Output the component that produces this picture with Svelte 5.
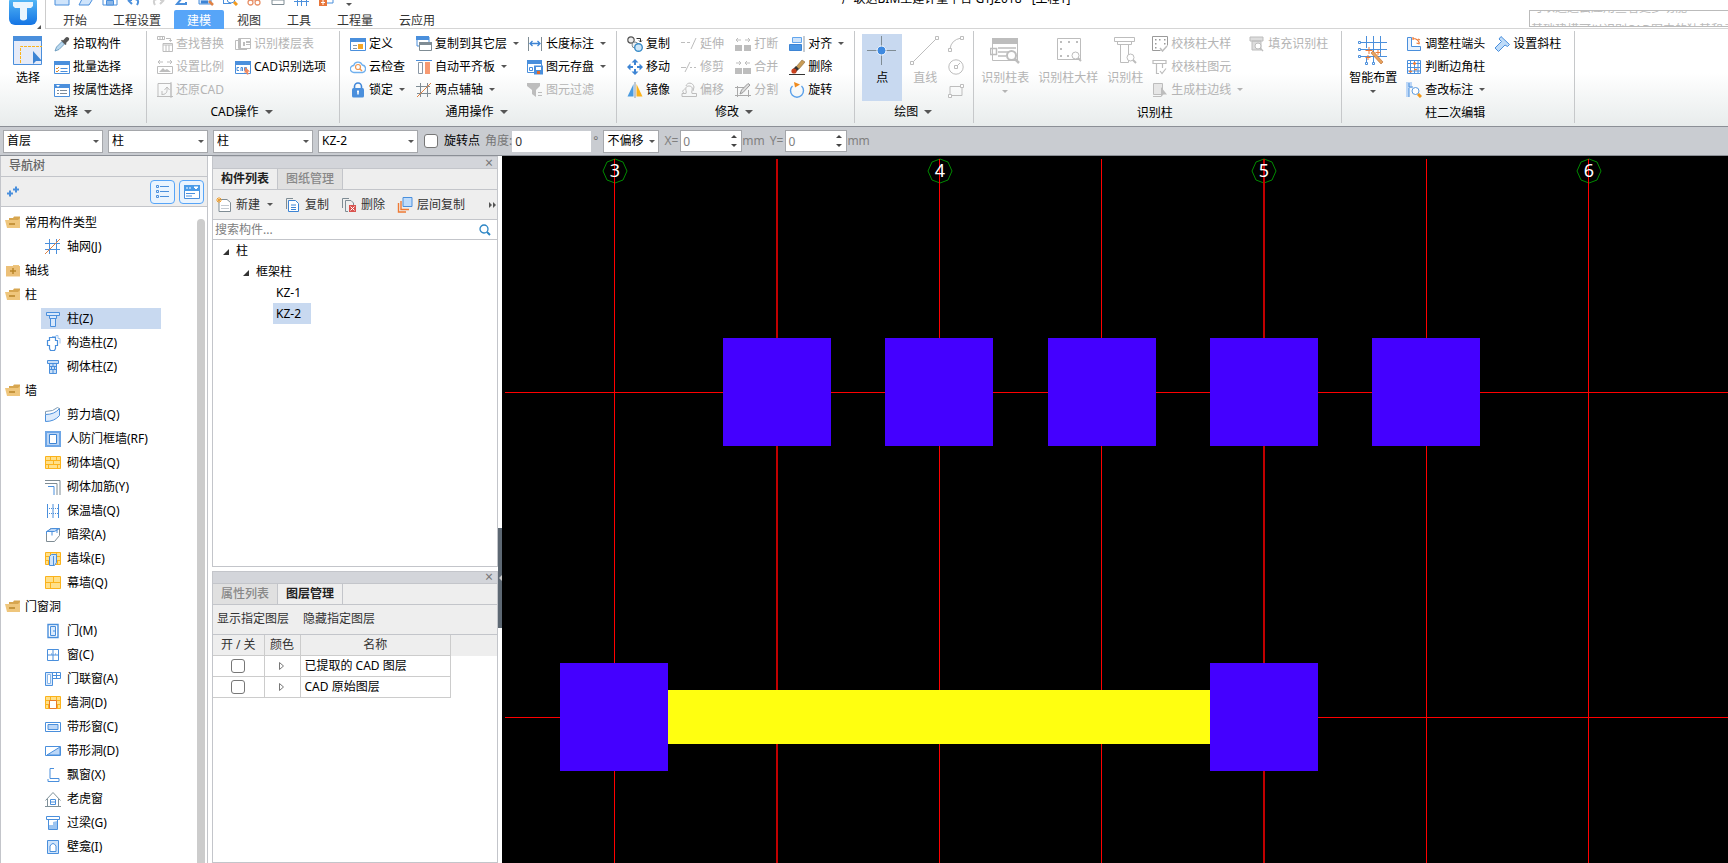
<script>
  // icon artwork, 16x16 unless the name starts with "big"
  const B = '#4a8fdc';
  const G = '#bdbdbd';
  const Y = '#fbb31c';
  const win = (c) => `<path d="M.5 2.500h15v12H.5z" fill="#fff" stroke="${c}"/><path d="M0 2h16v4H0z" fill="${c}"/>`;
  const brick = `<path d="M.5 1.500h15v12H.5z" fill="#ffe08a" stroke="${Y}"/><path d="M1 5.500h14M1 9.500h14M5.500 2v3M11.500 2v3M8.500 6v3M3.500 10v4M12.500 10v4" stroke="${Y}" fill="none"/>`;

  const icons = {
    bigSelect: `<path d="M.5.5h28v28H.5z" fill="#e6ebf8" stroke="${B}"/><path d="M0 0h29v5H0z" fill="${B}"/><path d="M7.500 27V10.500H29" fill="none" stroke="${Y}" stroke-dasharray="3 1"/><path d="M20 15v13l3-3h6z" fill="#3d84d4"/>`,
    pick: `<path d="M1 15l1.500-4L8 5.500 10.500 8 5 13.500z" fill="#b9d8ef" stroke="#5b8fb5" stroke-width=".8"/><path d="M7 4.500l4.500 4.500 1-1-.5-1 3-3q.8-2-1-2.800-1.500-.7-2.500.5L9 4.500l-1-.8z" fill="#555"/>`,
    batch: win(B) + `<path d="M2 9l1 1 2-2M2 12l1 1 2-2" fill="none" stroke="#e08b2c"/><path d="M6.500 9.500h7M6.500 12.500h7" stroke="${B}"/>`,
    attr: win(B) + `<path d="M2 3h4L4 5z" fill="#fff"/><path d="M3 8.500h2M6 8.500h7M3 11.500h2M6 11.500h7" stroke="#7b8a99"/>`,
    replace: `<path d="M.5.5h7v3h-7zM3 .5v3M5.500.5v3M9 2.500h4.500V5M12 4l1.500 1.500L15 4M6 7.500h9.500v8H6zM6 9h9M9 9v6M12 9v6" fill="none" stroke="${G}"/>`,
    scale: `<path d="M1 3h5M3 1L1 3l2 2M15 3h-5M13 1l2 2-2 2M.5 7.500h15v7H.5z" fill="none" stroke="${G}"/><path d="M2 13l4-4 2 2 2-1 4 3z" fill="${G}"/>`,
    restore: `<path d="M1 1.500h13v13H1zM14 0v16M0 14.500h16M5 12.500c6 0 5-5 5-7M7.500 8L10 5l2.500 3M5 9v4" fill="none" stroke="${G}"/>`,
    floors: `<path d="M3.500 2.500h12v10h-12zM3 4.500h-2.500v9H12" fill="none" stroke="${G}"/><path d="M4 3h2v9H4zM8 6h2v4H8zM11 5h4v2h-4zM11 8h4v1h-4z" fill="${G}"/>`,
    cadopt: win(B) + `<path d="M4 8.500H2v3h2M6 12V8.500h1.500V12M9.500 8.500v3h2v-3z" fill="none" stroke="${B}"/><path d="M10 8l5 4.500-2.500.2L14 15l-2 .8-1-2.500-1.500 1z" fill="#f0875c"/>`,
    define: win(B) + `<path d="M3 9.500h4M3 12.500h4" stroke="#8a97a5"/><path d="M8 8h5v5H8z" fill="#f5a623"/>`,
    cloud: `<path d="M4 13.500a3.500 3.500 0 01-.3-7 4.500 4.500 0 018.600-.5 3.800 3.800 0 01.2 7.500z" fill="#fff" stroke="#6fb0ee" stroke-width="1.300"/><circle cx="8" cy="8" r="2.500" fill="none" stroke="#ee9650" stroke-width="1.200"/><path d="M9.800 9.800L12 12" stroke="#ee9650" stroke-width="1.400"/>`,
    lock: `<path d="M4.500 7V4.500a3.500 3.500 0 017 0V7" fill="none" stroke="#3f86d8" stroke-width="1.600"/><rect x="2" y="6" width="12" height="9.500" rx="1.500" fill="#4a8fdc"/><path d="M8 8.500v4M7 9.500h2" stroke="#fff" stroke-width="1.500"/>`,
    copyFloor: `<path d="M1 1h12v9H1z" fill="#fff" stroke="${B}"/><path d="M0 0h13v4H0z" fill="${B}"/><path d="M3.500 6.500h12v8h-12z" fill="#fff" stroke="#7f8c94"/><path d="M3 6h13v3H3z" fill="#7f8c94"/>`,
    flush: `<path d="M0 1.500h16" stroke="${B}"/><path d="M2.500 3.500h4v11h-4z" fill="#fff" stroke="#8a97a5"/><path d="M9 3h5v12H9z" fill="#f79a72"/>`,
    aux: `<path d="M0 4.500h14M1 11.500h14M4.500 1v14M11.500 1v14" stroke="#7f8c94" fill="none"/><path d="M1 15L15 1" stroke="#e08244"/>`,
    length: `<path d="M1.500 1v14M14.500 1v14" stroke="#7f8c94"/><path d="M3 7.500h10M5.500 5L3 7.500 5.500 10M10.500 5L13 7.500 10.500 10" fill="none" stroke="#3d84d4" stroke-width="1.300"/>`,
    save: `<path d="M.5 1.500h14v12H.5z" fill="#fff" stroke="${B}"/><path d="M0 1h15v4H0z" fill="${B}"/><path d="M2.500 8.500h3v3h-3z" fill="none" stroke="${B}"/><path d="M7 6.500h9v9H7z" fill="${B}"/><path d="M9 8h5v3H9z" fill="#fff"/><path d="M10 12h3v3h-3z" fill="#e06a2c"/>`,
    filter: `<path d="M0 1h13v3L9 8v7l-4-3V8L0 4z" fill="${G}"/><path d="M11 10.500h4M11 13.500h4" stroke="${G}"/>`,
    copy: `<circle cx="4" cy="4" r="3.200" fill="#eee" stroke="#555" stroke-width="1.200"/><circle cx="8" cy="9" r="3" fill="#eee" stroke="#7f8c94"/><circle cx="11.500" cy="11.500" r="3.800" fill="#cfe6f7" stroke="#3a8cc8" stroke-width="1.400"/><path d="M9.500 2.500h4V6M12 4.500L13.500 6 15 4.500" fill="none" stroke="#333"/>`,
    move: `<path d="M8 0l3.500 3.500H9V6H7V3.500H4.500zM8 16l3.500-3.500H9V10H7v2.500H4.500zM0 8l3.500-3.500V7H6v2H3.500v2.500zM16 8l-3.500-3.500V7H10v2h2.500v2.500z" fill="#3d84d4"/>`,
    mirror: `<path d="M6.500 2v12.500H.5z" fill="#4a9be0"/><path d="M9.500 2v12.500h6z" fill="#fbb31c"/><path d="M8 0v16" stroke="#8a97a5"/>`,
    extend: `<path d="M0 6.500h4M6 6.500h3" stroke="${G}"/><path d="M10 13L15 2" stroke="${G}"/>`,
    trim: `<path d="M0 8.500h5M9 8.500h2M13 8.500h2M4 13L9 3" stroke="${G}"/>`,
    offset: `<path d="M1 14.500h14.500v-3H11c-1-2 1-4 0-6s-5-2-6 0 1 4 0 6H1zM3 11c-3-1 0-4 1-4M5 4c1-4 7-4 8 1l-1 4" fill="none" stroke="${G}"/>`,
    breakUp: `<path d="M0 9h7v6H0zM9 9h7v6H9z" fill="${G}"/><path d="M1 4h5M3 2L1 4l2 2M15 4h-5M13 2l2 2-2 2" fill="none" stroke="${G}"/>`,
    merge: `<path d="M0 9h7v6H0zM8 9h8v6H8z" fill="${G}"/><path d="M1 4h5M4 2l2 2-2 2M15 4h-5M12 2l-2 2 2 2" fill="none" stroke="${G}"/>`,
    split: `<path d="M0 5.500h9M0 13.500h16M2.500 4v11M13.500 8v7" stroke="#aaa" fill="none"/><path d="M5 12l1.500-4L13 1.500 15 3 8 10.500z" fill="#ddd" stroke="#999"/>`,
    align: `<path d="M3.500 1.500h9v5h-9z" fill="#cfe4fb" stroke="#62a5ec"/><path d="M.5 8.500h12v6H.5z" fill="#4a96e4" stroke="#3d84d4"/><path d="M15 0v16" stroke="#8a97a5"/>`,
    erase: `<path d="M0 15.500h16" stroke="#333"/><path d="M7 8l6-7 3 2-6 7z" fill="#c99c55" stroke="#8a6a3a" stroke-width=".6"/><path d="M4 10l3-3 3 3-3 3z" fill="#333"/><circle cx="5" cy="12" r="2.600" fill="#c9421f"/>`,
    rotate: `<path d="M12.500 4A6.500 6.500 0 113.500 4" fill="none" stroke="#5aa0ea" stroke-width="1.400"/><path d="M5 0l6 2.500-5 3z" fill="#ef8a1d"/>`,
    bigPoint: `<path d="M14.500 0v29M0 14.500h29" stroke="#7f8c94"/><circle cx="14.500" cy="14.500" r="4.500" fill="#3f8ae0" stroke="#fff"/>`,
    bigLine: `<path d="M3 26L26 3" stroke="${G}"/><path d="M.5 25.500h3v3h-3zM25.500.5h3v3h-3z" fill="#fff" stroke="${G}"/>`,
    arc: `<path d="M2 13Q3 4 13 2" fill="none" stroke="${G}"/><path d="M.5 12.500h3v3h-3zM12.500.5h3v3h-3z" fill="#fff" stroke="${G}"/>`,
    circle: `<circle cx="8" cy="8" r="7.200" fill="none" stroke="${G}"/><path d="M8 8l4-4" stroke="${G}"/><path d="M6.500 6.500h3v3h-3z" fill="#fff" stroke="${G}"/>`,
    rect: `<path d="M2 4.500h12v9H2z" fill="none" stroke="${G}"/><path d="M12.500 2.500h3v3h-3zM.5 12.500h3v3h-3z" fill="#fff" stroke="${G}"/>`,
    bigTable: `<path d="M2.500 2.500h25v22h-25z" fill="#fff" stroke="${G}"/><path d="M2 2h26v6H2z" fill="${G}"/><path d="M.5 12.500h6v6h-6zM8 12h18M8 16h10M8 20h8" fill="none" stroke="${G}" stroke-width="1.500"/><circle cx="21.500" cy="19.500" r="4.500" fill="#fff" stroke="${G}" stroke-width="2"/><path d="M25 23l4 4" stroke="${G}" stroke-width="2.500"/>`,
    bigSample: `<path d="M4.500 2.500h23v21h-23z" fill="none" stroke="${G}"/><path d="M7 5h2v2H7zM15 5h2v2h-2zM23 5h2v2h-2zM7 12h2v2H7zM7 19h2v2H7zM14 19h2v2h-2z" fill="${G}"/><circle cx="22.500" cy="19.500" r="3.500" fill="#fff" stroke="${G}"/><path d="M25 22l3 3" stroke="${G}" stroke-width="2"/>`,
    bigColumn: `<path d="M4.500 1.500h20v4h-20zM7.500 5.500h14v3h-14zM10.500 8.500h8v18h-8z" fill="#fff" stroke="${G}"/><circle cx="20.500" cy="21.500" r="3.500" fill="#fff" stroke="${G}"/><path d="M23 24l3 3" stroke="${G}" stroke-width="2"/>`,
    checkSample: `<path d="M.5.5h15v9M.5.5v14h8" fill="none" stroke="#9a9a9a"/><path d="M3 3h1.500v1.500H3zM7 3h1.500v1.500H7zM12 3h1.500v1.500H12zM3 7h1.500v1.500H3zM3 11h1.500v1.500H3zM12 7h1.500v1.500H12z" fill="#9a9a9a"/><path d="M8 12l2.500 3L15 10" fill="none" stroke="${G}" stroke-width="1.500"/>`,
    checkElem: `<path d="M1 1.500h13v3H1zM3 4.500h9M4.500 5v9.500H7M10.500 5v4M8 12l2 2.500 4-5" fill="none" stroke="${G}" stroke-width="1.200"/>`,
    edge: `<path d="M1.500 1.500h9v11h-9z" fill="#e6e6e6" stroke="${G}"/><path d="M1 14.500h8" stroke="${G}"/><path d="M9 5v10l2.500-2.500H15z" fill="${G}"/>`,
    fill: `<path d="M1 1h13v4H1zM3 5h9v9H3z" fill="#ddd" stroke="${G}"/><circle cx="9" cy="10" r="3" fill="#fff" stroke="${G}"/><path d="M11 12l3 3" stroke="${G}" stroke-width="1.500"/>`,
    bigSmart: `<path d="M2 6.500h27M3 13.500h26M3 20.500h26M8.500 20v7M15.500 20v7M8.500 0v12M15.500 0v16M22.500 0v20" stroke="${B}" fill="none"/><path d="M.5 5.500h2v2h-2zM.5 12.500h2v2h-2zM.5 19.500h2v2h-2zM7.500 26.500h2v2h-2zM14.500 26.500h2v2h-2z" fill="#fff" stroke="${B}"/><path d="M13 17l2-2 10 11-2 2z" fill="#e8a25c" stroke="#b9672a" stroke-width=".6"/><path d="M11 11v7M7.500 14.500h7M20 14v5M17.500 16.500h5M10 19v5M7.500 21.500h5" stroke="#ee7a35" fill="none"/>`,
    end: `<path d="M1.500 1.500h4v9h9v4h-13z" fill="#e9f2fd" stroke="${B}"/><path d="M7 2.500q5 0 6.500 5M13.500 8l-3-1M7 1v3M12 3l2 1" fill="none" stroke="#ee7a35" stroke-width="1.200"/>`,
    corner: `<path d="M1.500 1.500h13v13h-13zM4.500 1v14M8.500 1v14M12 1v14M1 4.500h14M1 8.500h14M1 12h14" fill="none" stroke="${B}"/><path d="M7 4.500h3M8.500 3v3M3 12.500h3M8 10.500h3" stroke="#ee7a35" stroke-width="1.500"/>`,
    label: `<path d="M0 0h6v6H3v9H0z" fill="#bcd7f7"/><path d="M3 1v4h4M3 15V6" fill="none" stroke="${B}"/><circle cx="9.500" cy="9" r="3.500" fill="#fff" stroke="#5b9be0"/><path d="M12 12l3 3" stroke="#f29a1d" stroke-width="3"/>`,
    slant: `<path d="M7 .5l8.500 8-2 2-2.500-1.500-6.500 6.500L1 12l6.500-6.500L5 3z" fill="#bfdcf9" stroke="${B}"/>`,
    grid: `<path d="M0 4.500h15M0 10.500h15M4.500 0v15M11.500 0v15" stroke="${B}" fill="none"/><path d="M0 15L15 0" stroke="#e08244"/>`,
    column: `<path d="M1.500 1.500h13v3h-13zM4.500 4.500v3h7v-3zM5.500 7v8.500h5V7" fill="#d8e8fb" stroke="${B}"/>`,
    structCol: `<path d="M7 1.500h4v-1h2v3h2v5" fill="none" stroke="#9cc3ee"/><path d="M4.500 2.500h6v3h2v5h-2v3l-1 2h-4l-1-2v-3h-2v-5h2z" fill="#fff" stroke="${B}" stroke-width="1.200"/>`,
    brickCol: `<path d="M2.500 1.500h11v3h-11zM4.500 4.500h7v10h-7z" fill="#c9dff7" stroke="${B}"/><path d="M4 7.500h8M4 10.500h8M8 4v3M6.500 7v3M9.500 7v3M8 11v3" stroke="${B}"/>`,
    shear: `<path d="M.5 7.500q9 0 14-6v7q-5 6-14 6z" fill="#dcebfc" stroke="${B}"/><path d="M.5 7.500v-3q8 0 12-4l2.500 1.500" fill="none" stroke="#7f9bb5"/>`,
    frame: `<path d="M1 1h14v14H1z" fill="#b9d4f5" stroke="#6ea6e6" stroke-width="2"/><path d="M4.500 3.500h7v9h-7z" fill="#fff" stroke="#3d84d4"/>`,
    brick,
    rebar: `<path d="M0 1.500h15V16M0 4.500h12V16" fill="none" stroke="#7f8c94"/><path d="M3 7.500h6V16" fill="none" stroke="${B}"/>`,
    insul: `<path d="M2.500 1v14M8 1v14M13.500 1v14" stroke="${B}"/><path d="M2 5.500h12M2 10.500h12" stroke="${B}" stroke-dasharray="1 1"/>`,
    beam: `<path d="M1.500 5.500l4-4h9v7l-5 6h-8z" fill="#fff" stroke="#7f8c94"/><path d="M1.500 7V4.500l5-3h8l-5 3h-8M7 4.500v4M12 2v4" fill="#bcd7f7" stroke="${B}"/>`,
    buttress: brick + `<path d="M4.500 5.500l2-2h5v8l-2 3h-5zM8.500 5v9" fill="#cfe4fb" stroke="${B}"/>`,
    curtain: `<path d="M.5 1.500h15v12H.5z" fill="#ffe08a" stroke="${Y}"/><path d="M1 7.500h14M8.500 2v5M5.500 8v5" stroke="${Y}"/>`,
    door: `<path d="M3 1.500h10v13H3z" fill="#fff" stroke="${B}" stroke-width="1.400"/><path d="M5.500 3.500h5v9h-5z" fill="#dcebfc" stroke="${B}"/><path d="M9 7v2" stroke="${B}"/>`,
    window: `<path d="M2.500 2.500h11v11h-11zM2 8h12M8 2v12" fill="none" stroke="${B}"/><path d="M6 7h1M10 7h1" stroke="${B}"/>`,
    doorWin: `<path d="M.5 1.500h7v13h-7z" fill="#dcebfc" stroke="${B}"/><path d="M2.500 3.500h3v9h-3z" fill="#fff" stroke="#8ab6e8"/><path d="M7.500 1.500h8v6h-8zM11.500 1v7M8 4.500h8" fill="none" stroke="${B}"/>`,
    hole: brick + `<path d="M4.500 5.500h7v8h-7z" fill="#fff" stroke="#e77a2b"/>`,
    stripWin: `<path d="M.5 3.500h15v9H.5z" fill="#fff" stroke="${B}"/><path d="M3 5.500h10v5H3z" fill="#bcd7f7" stroke="${B}"/>`,
    stripHole: `<path d="M.5 3.500h15v9H.5z" fill="#fff" stroke="${B}"/><path d="M2 12L15 4v8z" fill="#bcd7f7" stroke="${B}"/>`,
    bay: `<path d="M9 1.500H5v10h9v3H3V12" fill="none" stroke="${B}"/>`,
    dormer: `<path d="M.5 9.500L8 1.500l7.500 8M2.500 8v7M13.500 8v7M0 15.500h16" fill="none" stroke="#7f9098"/><path d="M5.500 8.500h5v5h-5zM5 11h6" fill="#fff" stroke="${B}"/>`,
    lintel: `<path d="M1.500 1.500h13v3h-13zM3.500 4.500h9v10h-9z" fill="#fff" stroke="${B}"/><path d="M4 14v-4h4V7l4-1v8z" fill="#9cc4f0"/>`,
    niche: `<path d="M2.500 1.500h11v13h-11z" fill="#cfe4fb" stroke="${B}"/><path d="M5 12.500V7q3-5 6 0v5.500z" fill="#fff" stroke="${B}"/>`,
    newItem: `<path d="M3 2.500h8l3.500 3v9H3z" fill="#fff" stroke="#7f8c94"/><path d="M5 8.500h8M5 11.500h8" stroke="#c4cad0"/><path d="M3 0v6M0 3h6M1 1l4 4M5 1L1 5" stroke="#f0a030"/>`,
    copyDoc: `<path d="M1.500 12V1.500H8" fill="none" stroke="#7f8c94"/><path d="M3.500 3.500h7l3 3v8h-10z" fill="#fff" stroke="#3d84d4"/><path d="M6 8h5M6 10.500h5M6 12.500h5" stroke="#3d84d4"/>`,
    delDoc: `<path d="M1.500 11V1.500H8M12.500 8V6L10 3.500H4.500v11H7" fill="none" stroke="#7f8c94"/><path d="M8 8h7v7H8z" fill="#d9534f"/><path d="M9.500 9.500l4 4M13.500 9.500l-4 4" stroke="#fff"/>`,
    layers: `<path d="M1.500 6v9H9M4 4v8.500h8" fill="none" stroke="#ee7a35" stroke-width="1.400"/><path d="M6 .5h9v9H6z" fill="#bfdcfb" stroke="#4a8fdc"/>`,
    open: `<path d="M4 3h4l1-1.500h6V12H4z" fill="#d7a650"/><path d="M0 5h13l2-2v10H2z" fill="#efc67c"/><path d="M4 9h6" stroke="#b98528" stroke-width="1.500"/>`,
    closed: `<path d="M8 2h6v2H8z" fill="#efc67c"/><path d="M1 3h14v10.500H1z" fill="#ecc078"/><path d="M5 8h6M8 5v6" stroke="#b98528" stroke-width="1.500"/>`,
    qNew: `<path d="M1 0h14v15H1z" fill="#cfe4fb" stroke="${B}"/>`,
    qOpen: `<path d="M1 15L5 7h11l-5 8z" fill="#cfe4fb" stroke="${B}"/>`,
    qSave: `<path d="M1 1h14v14H1z" fill="#fff" stroke="${B}"/><path d="M4.500 10.500h7V15h-7z" fill="#8ab6e8" stroke="${B}"/>`,
    qUndo: `<path d="M2 10l4 4M2 10h4M9 9q5 1 2 6" fill="none" stroke="${B}" stroke-width="2"/>`,
    qRedo: `<path d="M14 10l-4 4M14 10h-4M7 9q-5 1-2 6" fill="none" stroke="#d0d0d0" stroke-width="2"/>`,
    qSum: `<path d="M12 2H4l4 6-5 6h9v-2" fill="none" stroke="${B}" stroke-width="2"/>`,
    qFind: `<path d="M1 1h12v13H1z" fill="#cfe4fb" stroke="${B}"/><path d="M3 12h7" stroke="#3d84d4" stroke-width="3"/><path d="M11 11l4 4" stroke="#e08244" stroke-width="2.500"/>`,
    qView: `<path d="M1 13.500h8M1.500 5v9" stroke="${B}"/><circle cx="9" cy="9" r="4" fill="none" stroke="${B}"/><path d="M12 12l3 3" stroke="#f29a1d" stroke-width="3"/>`,
    qTool: `<path d="M2 10h12" stroke="#e8926a"/><circle cx="4.500" cy="12.500" r="2.500" fill="none" stroke="#e8926a" stroke-width="1.300"/><circle cx="11.500" cy="12.500" r="2.500" fill="none" stroke="#e8926a" stroke-width="1.300"/>`,
    qBox: `<path d="M2 14.500h12V10H2z" fill="none" stroke="#7f8c94"/>`,
    qGrid: `<path d="M0 11.500h15M3.500 8v8M7.500 8v8M12.500 8v8" stroke="${B}" fill="none"/>`,
    qAdd: `<path d="M4 8h11v5H4z" fill="#fff" stroke="${B}"/><path d="M1 8h8v8H1z" fill="#e8763a"/><path d="M3 12.500h4M5 10v5" stroke="#fff"/>`,
  };

  const quick = [
    ['qNew', '新建'], ['qOpen', '打开'], ['qSave', '保存'], ['qUndo', '撤销'], ['qRedo', '恢复'], ['qSum', '汇总计算'],
    ['qFind', '查找'], ['qView', '查看'], ['qTool', '检查'], ['qBox', '选项'], ['qGrid', '轴网'], ['qAdd', '添加'],
  ];
  const tabs = ['开始', '工程设置', '建模', '视图', '工具', '工程量', '云应用'];

  // item: [icon, text, disabled, has drop-down]
  const groups = [
    {
      title: '选择', menu: true, pad: 'wide',
      cols: [
        { big: ['bigSelect', '选择'] },
        [['pick', '拾取构件'], ['batch', '批量选择'], ['attr', '按属性选择']],
      ],
    },
    {
      title: 'CAD操作', menu: true,
      cols: [
        [['replace', '查找替换', 1], ['scale', '设置比例', 1], ['restore', '还原CAD', 1]],
        [['floors', '识别楼层表', 1], ['cadopt', 'CAD识别选项']],
      ],
    },
    {
      title: '通用操作', menu: true,
      cols: [
        [['define', '定义'], ['cloud', '云检查'], ['lock', '锁定', 0, 1]],
        [['copyFloor', '复制到其它层', 0, 1], ['flush', '自动平齐板', 0, 1], ['aux', '两点辅轴', 0, 1]],
        [['length', '长度标注', 0, 1], ['save', '图元存盘', 0, 1], ['filter', '图元过滤', 1]],
      ],
    },
    {
      title: '修改', menu: true,
      cols: [
        [['copy', '复制'], ['move', '移动'], ['mirror', '镜像']],
        [['extend', '延伸', 1], ['trim', '修剪', 1], ['offset', '偏移', 1]],
        [['breakUp', '打断', 1], ['merge', '合并', 1], ['split', '分割', 1]],
        [['align', '对齐', 0, 1], ['erase', '删除'], ['rotate', '旋转']],
      ],
    },
    {
      title: '绘图', menu: true, pad: 'draw',
      cols: [
        { big: ['bigPoint', '点'], active: true },
        { big: ['bigLine', '直线', 1] },
        [['arc', '', 1], ['circle', '', 1], ['rect', '', 1]],
      ],
    },
    {
      title: '识别柱', pad: 'slim',
      cols: [
        { big: ['bigTable', '识别柱表', 1, 1] },
        { big: ['bigSample', '识别柱大样', 1] },
        { big: ['bigColumn', '识别柱', 1] },
        [['checkSample', '校核柱大样', 1], ['checkElem', '校核柱图元', 1], ['edge', '生成柱边线', 1, 1]],
        [['fill', '填充识别柱', 1]],
      ],
    },
    {
      title: '柱二次编辑', pad: 'slim',
      cols: [
        { big: ['bigSmart', '智能布置', 0, 1] },
        [['end', '调整柱端头'], ['corner', '判断边角柱'], ['label', '查改标注', 0, 1]],
        [['slant', '设置斜柱']],
      ],
    },
  ];
  const shapeNames = { arc: '弧', circle: '圆', rect: '矩形' };

  const filters = [
    ['楼层', '首层'],
    ['构件分类', '柱'],
    ['构件类型', '柱'],
    ['构件', 'KZ-2'],
  ];

  const nav = [
    { name: '常用构件类型', open: true, items: [['grid', '轴网(J)']] },
    { name: '轴线', open: false, items: [] },
    { name: '柱', open: true, items: [['column', '柱(Z)'], ['structCol', '构造柱(Z)'], ['brickCol', '砌体柱(Z)']] },
    {
      name: '墙', open: true,
      items: [
        ['shear', '剪力墙(Q)'], ['frame', '人防门框墙(RF)'], ['brick', '砌体墙(Q)'], ['rebar', '砌体加筋(Y)'],
        ['insul', '保温墙(Q)'], ['beam', '暗梁(A)'], ['buttress', '墙垛(E)'], ['curtain', '幕墙(Q)'],
      ],
    },
    {
      name: '门窗洞', open: true,
      items: [
        ['door', '门(M)'], ['window', '窗(C)'], ['doorWin', '门联窗(A)'], ['hole', '墙洞(D)'], ['stripWin', '带形窗(C)'],
        ['stripHole', '带形洞(D)'], ['bay', '飘窗(X)'], ['dormer', '老虎窗'], ['lintel', '过梁(G)'], ['niche', '壁龛(I)'],
      ],
    },
  ];
  let current = $state('柱(Z)');

  let part = $state('KZ-2');
  const layers = ['已提取的 CAD 图层', 'CAD 原始图层'];

  // drawing, in canvas pixels
  const axes = [
    { x: 112, no: '3' },
    { x: 274, wide: true },
    { x: 437, no: '4' },
    { x: 599 },
    { x: 761, no: '5', wide: true },
    { x: 924 },
    { x: 1086, no: '6' },
  ];
  const rows = [236, 561];
  const columns = [
    [221, 182], [383, 182], [546, 182], [708, 182], [870, 182],
    [58, 507], [708, 507],
  ];
</script>

{#snippet icon(name, size = 16)}
  <svg class="icon" width={size} height={size} viewBox="0 0 {size} {size}" aria-hidden="true">{@html icons[name]}</svg>
{/snippet}

<div class="app">
  <header>
    <button class="logo" aria-label="应用菜单">
      <svg width="42" height="40" viewBox="0 0 42 40">
        <defs>
          <linearGradient id="lg" x1="0" y1="0" x2="0" y2="1">
            <stop offset="0" stop-color="#5cc0f8" />
            <stop offset="1" stop-color="#1474e4" />
          </linearGradient>
        </defs>
        <rect x="9" y="7" width="28" height="29" rx="6" fill="url(#lg)" />
        <path d="M13 13h20v4l-2 2h-4v11q-4 3-7 0V19h-5l-2-2z" fill="#e9f5fe" />
        <path d="M41 36v4h-4z" fill="#555" />
      </svg>
    </button>
    <div class="head-main">
      <div class="titlebar">
        <div class="quick">
          {#each quick as [ic, name]}
            <button aria-label={name}>{@render icon(ic)}</button>
          {/each}
          <i class="caret"></i>
        </div>
        <div class="title">广联达BIM土建计量平台 GTJ2018 - [工程1]</div>
      </div>
      <div class="tabbar">
        <nav class="tabs">
          {#each tabs as t}
            <button class:on={t === '建模'}>{t}</button>
          {/each}
        </nav>
        <div class="ticker">
          <span>可以通过云应用查看更多功能</span>
          <span>基础建模可以识别CAD图中的独基和承台</span>
        </div>
      </div>
    </div>
  </header>

  <section class="ribbon">
    {#each groups as g}
      <div class="group {g.pad ?? ''}">
        <div class="cols">
          {#each g.cols as c}
            {#if c.big}
              <button class="big" class:active={c.active} disabled={!!c.big[2]}>
                {@render icon(c.big[0], 30)}
                <span>{c.big[1]}</span>
                {#if c.big[3]}<i class="caret"></i>{/if}
              </button>
            {:else}
              <div class="col">
                {#each c as [ic, text, off, drop]}
                  <button class="tool" disabled={!!off} aria-label={text || shapeNames[ic]}>
                    {@render icon(ic)}
                    {#if text}<span>{text}</span>{/if}
                    {#if drop}<i class="caret"></i>{/if}
                  </button>
                {/each}
              </div>
            {/if}
          {/each}
        </div>
        <div class="group-title" class:plain={!g.menu}>
          {g.title}{#if g.menu}<i class="caret large"></i>{/if}
        </div>
      </div>
    {/each}
  </section>

  <section class="options">
    {#each filters as [label, value]}
      <div class="select">
        <select aria-label={label}><option>{value}</option></select>
        <i class="caret"></i>
      </div>
    {/each}
    <label class="check"><input type="checkbox" />旋转点</label>
    <label class="angle">角度:<input type="text" value="0" /><span>°</span></label>
    <div class="select short">
      <select aria-label="偏移方式"><option>不偏移</option></select>
      <i class="caret"></i>
    </div>
    {#each ['X', 'Y'] as axis}
      <label class="spin">{axis}=<span class="box"><input type="text" value="0" disabled /><i class="up"></i><i class="down"></i></span>mm</label>
    {/each}
  </section>

  <main>
    <aside class="nav">
      <h2>导航树</h2>
      <div class="nav-bar">
        <button class="plus" aria-label="展开">
          <svg width="14" height="12" viewBox="0 0 14 12"><path d="M0 7.500h6M3 4.500v6M6 3.500h6M9 .5v6" stroke={B} stroke-width="2" /></svg>
        </button>
        <button class="view" aria-label="列表视图">
          <svg width="16" height="16" viewBox="0 0 16 16"><path d="M5 2.500h9M5 7.500h9M5 12.500h9" stroke={B} /><path d="M1.500 1.500h2v2h-2zM1.500 6.500h2v2h-2zM1.500 11.500h2v2h-2z" fill="none" stroke={B} /></svg>
        </button>
        <button class="view" aria-label="面板视图">
          <svg width="16" height="16" viewBox="0 0 16 16"><path d="M.5 1.500h15v13H.5z" fill="#fff" stroke={B} /><path d="M0 1h16v6H0z" fill="#4a9be8" /><path d="M2 4h2M5 4h2M10 3h4l-2 2z" fill="#fff" stroke="#fff" /><path d="M2 9.500h9M2 12h6" stroke={B} /></svg>
        </button>
      </div>
      <div class="nav-list">
        <div class="nav-items">
          {#each nav as n}
            <button class="folder">{@render icon(n.open ? 'open' : 'closed')}{n.name}</button>
            {#each n.items as [ic, text]}
              <button class="leaf" class:selected={current === text} onclick={() => (current = text)}>
                {@render icon(ic)}{text}
              </button>
            {/each}
          {/each}
        </div>
        <div class="scroll"></div>
      </div>
    </aside>

    <div class="docks">
      <section class="dock">
        <div class="dock-head"><button aria-label="关闭">×</button></div>
        <div class="dock-tabs"><button class="on">构件列表</button><button>图纸管理</button></div>
        <div class="dock-bar">
          <button>{@render icon('newItem')}新建<i class="caret"></i></button>
          <button>{@render icon('copyDoc')}复制</button>
          <button>{@render icon('delDoc')}删除</button>
          <button>{@render icon('layers')}层间复制</button>
          <button class="more" aria-label="更多"><i></i><i></i></button>
        </div>
        <div class="search">
          <input type="text" placeholder="搜索构件..." aria-label="搜索构件" />
          <svg width="12" height="12" viewBox="0 0 12 12"><circle cx="5" cy="5" r="4" fill="none" stroke="#2b85c4" stroke-width="1.300" /><path d="M8 8l3 3" stroke="#2b85c4" stroke-width="2" /></svg>
        </div>
        <ul class="tree">
          <li><i class="tri"></i>柱
            <ul>
              <li><i class="tri"></i>框架柱
                <ul class="parts">
                  {#each ['KZ-1', 'KZ-2'] as p}
                    <li><button class:selected={part === p} onclick={() => (part = p)}>{p}</button></li>
                  {/each}
                </ul>
              </li>
            </ul>
          </li>
        </ul>
      </section>

      <section class="dock">
        <div class="dock-head"><button aria-label="关闭">×</button></div>
        <div class="dock-tabs"><button>属性列表</button><button class="on">图层管理</button></div>
        <div class="dock-bar links"><button>显示指定图层</button><button>隐藏指定图层</button></div>
        <div class="table-wrap">
          <table>
            <thead>
              <tr><th class="c1">开 / 关</th><th class="c2">颜色</th><th class="c3">名称</th></tr>
            </thead>
            <tbody>
              {#each layers as l}
                <tr>
                  <td><input type="checkbox" aria-label={l} /></td>
                  <td><svg width="6" height="8" viewBox="0 0 6 8"><path d="M.5.5v7l4-3.500z" fill="#fff" stroke="#777" /></svg></td>
                  <td class="name">{l}</td>
                </tr>
              {/each}
            </tbody>
          </table>
        </div>
      </section>
    </div>

    <div class="splitter"><button aria-label="折叠"><i></i></button></div>

    <div class="canvas">
      <svg width="100%" height="100%">
        {#each axes as a}
          {#if a.no}
            <polygon points="0,-12 8,-9 12,0 8,9 0,12 -8,9 -12,0 -8,-9" transform="translate({a.x + 1} 15)" fill="none" stroke="#008a00" />
          {/if}
          <rect x={a.x} y="3" width={a.wide ? 2 : 1} height="100%" fill={a.wide ? '#c00000' : '#ff0000'} />
          {#if a.no}
            <text x={a.x + 1} y="21" text-anchor="middle">{a.no}</text>
          {/if}
        {/each}
        {#each rows as y}
          <rect x="3" {y} width="100%" height="1" fill="#ff0000" />
        {/each}
        <rect x="166" y="534" width="542" height="54" fill="#ffff10" />
        {#each columns as [x, y]}
          <rect {x} {y} width="108" height="108" fill="#4400ff" />
        {/each}
      </svg>
    </div>
  </main>
</div>

<style>
  :global(body) {
    margin: 0;
  }

  .app {
    display: flex;
    flex-direction: column;
    height: 100vh;
    overflow: hidden;
    background: #fff;
    color: #000;
    font: 12px/16px "Noto Sans", "Noto Sans CJK SC", sans-serif;
  }

  .app * {
    box-sizing: border-box;
  }

  button,
  input,
  select {
    margin: 0;
    padding: 0;
    border: 0;
    background: none;
    color: inherit;
    font: inherit;
  }

  button {
    display: flex;
    align-items: center;
    white-space: nowrap;
  }

  .icon {
    flex: none;
    display: block;
  }

  .caret {
    flex: none;
    width: 0;
    height: 0;
    border: 3px solid transparent;
    border-top-color: #555;
    border-bottom: 0;
  }

  .caret.large {
    border-width: 4px;
    border-bottom: 0;
  }

  header {
    display: flex;
    height: 29px;
    flex: none;
  }

  .logo {
    width: 46px;
    align-items: flex-end;
    border-right: 1px solid #ccc;
    overflow: hidden;
  }

  .logo svg {
    flex: none;
  }

  .head-main {
    flex: 1;
    min-width: 0;
    border-bottom: 1px solid #d5d5d5;
  }

  .titlebar {
    display: flex;
    align-items: flex-end;
    height: 10px;
    padding: 0 168px 4px 8px;
    overflow: hidden;
  }

  .quick {
    display: flex;
    align-items: flex-end;
    gap: 8px;
  }

  .quick .caret {
    margin-left: 4px;
  }

  .title {
    flex: 1;
    text-align: center;
    line-height: 14px;
  }

  .tabbar {
    display: flex;
    justify-content: space-between;
    height: 18px;
    padding-left: 4px;
  }

  .tabs {
    display: flex;
  }

  .tabs button {
    height: 19px;
    padding: 2px 13px 0;
    color: #333;
  }

  .tabs .on {
    background: #57a5f8;
    color: #fff;
    border-radius: 2px 2px 0 0;
  }

  .ticker {
    display: flex;
    flex-direction: column;
    justify-content: center;
    width: 199px;
    height: 17px;
    padding-left: 1px;
    border: 1px solid #bbb;
    border-right: 0;
    overflow: hidden;
    white-space: nowrap;
    color: #bbb;
  }

  .ticker span {
    flex: none;
    line-height: 22px;
  }

  .ribbon {
    display: flex;
    flex: none;
    height: 97px;
    background: linear-gradient(#fff 0, #fff 45%, #e8ecec 100%);
  }

  .group {
    display: flex;
    flex-direction: column;
    margin: 2px 0 3px;
    padding: 0 13px 0 10px;
    border-right: 1px solid #c6c8ca;
  }

  .group.wide {
    padding-left: 13px;
  }

  .group.slim {
    padding-left: 7px;
  }

  .group.draw {
    padding: 0 9px 0 7px;
  }

  .cols {
    display: flex;
    gap: 11px;
    height: 72px;
  }

  .slim .cols {
    gap: 9px;
  }

  .draw .cols {
    gap: 8px;
  }

  .col {
    padding-top: 1px;
  }

  .tool {
    gap: 3px;
    height: 23px;
  }

  .tool .caret {
    margin: 0 -3px 0 3px;
  }

  .big {
    flex-direction: column;
    align-self: flex-start;
    height: 67px;
    margin-top: 3px;
    padding-top: 2px;
  }

  .big span {
    margin-top: 4px;
  }

  .big .caret {
    margin-top: 4px;
  }

  .big.active {
    width: 40px;
    background: #c8d9f0;
  }

  button:disabled {
    color: #b4b4b4;
  }

  button:disabled .caret {
    border-top-color: #b4b4b4;
  }

  .group-title {
    display: flex;
    align-items: center;
    justify-content: center;
    gap: 6px;
    line-height: 22px;
  }

  .group-title.plain {
    padding-top: 1px;
  }

  .options {
    display: flex;
    flex: none;
    align-items: center;
    gap: 5px;
    height: 30px;
    padding-left: 3px;
    background: #c9ccd1;
    border-top: 1px solid #8b8f96;
    border-bottom: 1px solid #8b8f96;
    white-space: nowrap;
  }

  .select {
    position: relative;
    width: 100px;
    height: 23px;
  }

  .select.short {
    width: 56px;
  }

  .select select {
    width: 100%;
    height: 100%;
    padding-left: 3px;
    border: 1px solid #a5a7ab;
    background: #fff;
    appearance: none;
  }

  .select .caret {
    position: absolute;
    right: 4px;
    top: 10px;
    pointer-events: none;
  }

  input[type="checkbox"] {
    width: 14px;
    height: 14px;
    border: 1px solid #777;
    border-radius: 3px;
    background: #fff;
    appearance: none;
  }

  .check {
    display: flex;
    align-items: center;
    gap: 6px;
    padding-left: 1px;
  }

  .angle {
    display: flex;
    align-items: center;
    color: #777;
  }

  .angle input {
    width: 79px;
    height: 21px;
    padding-left: 3px;
    background: #fff;
    color: #333;
  }

  .angle span {
    padding-left: 2px;
  }

  .spin {
    display: flex;
    align-items: center;
    color: #808080;
  }

  .box {
    position: relative;
    width: 62px;
    height: 22px;
    margin-left: 2px;
    border: 1px solid #a5a7ab;
    background: #fff;
  }

  .box input {
    width: 100%;
    height: 100%;
    padding-left: 2px;
  }

  .box i {
    position: absolute;
    right: 4px;
    border: 3px solid transparent;
  }

  .box .up {
    top: 4px;
    border-top: 0;
    border-bottom-color: #444;
  }

  .box .down {
    bottom: 4px;
    border-bottom: 0;
    border-top-color: #444;
  }

  main {
    display: flex;
    flex: 1;
    min-height: 0;
  }

  .nav {
    display: flex;
    flex-direction: column;
    width: 208px;
    flex: none;
    border: solid #c3c5ca;
    border-width: 0 1px;
  }

  .nav h2 {
    flex: none;
    margin: 0;
    padding-left: 8px;
    background: #eee;
    border-bottom: 1px solid #c3c5ca;
    color: #666;
    font-size: 12px;
    font-weight: 500;
    line-height: 20px;
  }

  .nav-bar {
    display: flex;
    flex: none;
    align-items: center;
    gap: 4px;
    height: 30px;
    padding: 0 3px 0 6px;
    background: #eee;
    border-bottom: 1px solid #c3c5ca;
  }

  .plus {
    margin-right: auto;
  }

  .view {
    justify-content: center;
    width: 25px;
    height: 24px;
    border: 1px solid #57a5f8;
    border-radius: 4px;
    background: #eaf4fe;
  }

  .nav-list {
    display: flex;
    flex: 1;
    min-height: 0;
    overflow: hidden;
  }

  .nav-items {
    flex: 1;
    padding-top: 4px;
  }

  .folder {
    gap: 4px;
    height: 24px;
    padding-left: 4px;
  }

  .leaf {
    gap: 6px;
    width: 120px;
    height: 21px;
    margin: 1px 0 2px 40px;
    padding-left: 4px;
  }

  .leaf + .leaf {
    margin-top: 3px;
  }

  .selected {
    background: #c8d9f0;
  }

  .scroll {
    width: 8px;
    margin: 12px 2px 0 0;
    border-radius: 4px 4px 0 0;
    background: #ccc;
  }

  .docks {
    display: grid;
    grid-template-rows: 410fr 292fr;
    gap: 4px;
    width: 286px;
    flex: none;
    margin-left: 4px;
  }

  .dock {
    display: flex;
    flex-direction: column;
    min-height: 0;
    border: 1px solid #c3c5ca;
    background: #fff;
  }

  .dock-head {
    display: flex;
    flex: none;
    justify-content: flex-end;
    height: 11px;
    padding-right: 4px;
    background: #d3d5da;
    color: #777;
    font-size: 14px;
  }

  .dock-head button {
    line-height: 8px;
  }

  .dock-tabs {
    display: flex;
    flex: none;
    height: 22px;
    background: #eee;
    border: solid #c3c5ca;
    border-width: 1px 0;
  }

  .dock-tabs button {
    padding: 0 8px;
    border-right: 1px solid #c3c5ca;
    background: #e0e0e0;
    color: #888;
    font-weight: 500;
  }

  .dock-tabs .on {
    background: #eee;
    color: #222;
    font-weight: 700;
  }

  .dock-bar {
    display: flex;
    flex: none;
    align-items: center;
    gap: 12px;
    height: 30px;
    padding-left: 3px;
    background: #eee;
    border-bottom: 1px solid #c3c5ca;
    color: #333;
  }

  .dock-bar button {
    gap: 4px;
  }

  .dock-bar .caret {
    margin-left: 3px;
  }

  .dock-bar .more {
    gap: 1px;
    margin: 0 1px 0 auto;
  }

  .more i {
    border: 3px solid transparent;
    border-left-color: #555;
    border-right: 0;
  }

  .dock-bar.links {
    gap: 14px;
    padding-left: 4px;
  }

  .search {
    display: flex;
    flex: none;
    align-items: center;
    height: 20px;
    padding: 0 6px 0 2px;
    border-bottom: 1px solid #c3c5ca;
  }

  .search input {
    flex: 1;
    min-width: 0;
  }

  .search input::placeholder {
    color: #808080;
  }

  .tree,
  .tree ul {
    margin: 0;
    padding: 0 0 0 20px;
    list-style: none;
    line-height: 21px;
  }

  .tree {
    padding-left: 10px;
  }

  .tri {
    display: inline-block;
    margin-right: 7px;
    border: 3px solid #333;
    border-top-color: transparent;
    border-left-color: transparent;
  }

  .tree .parts {
    padding-left: 30px;
  }

  .parts button {
    height: 21px;
    padding: 0 10px 0 3px;
  }

  .table-wrap {
    background: linear-gradient(#eee 21px, #fff 21px);
  }

  table {
    border-collapse: collapse;
    table-layout: fixed;
    width: 238px;
  }

  th,
  td {
    height: 21px;
    padding: 0;
    border: solid #ccc;
    border-width: 0 1px 1px 0;
    text-align: center;
    line-height: 16px;
  }

  th {
    color: #333;
    font-weight: 400;
  }

  td input,
  td svg {
    display: block;
    margin: 0 auto;
  }

  .c1 {
    width: 51px;
  }

  .c2 {
    width: 36px;
  }

  .name {
    padding-left: 4px;
    text-align: left;
  }

  .splitter {
    display: flex;
    align-items: center;
    width: 4px;
    flex: none;
  }

  .splitter button {
    justify-content: flex-end;
    width: 4px;
    height: 100px;
    margin-top: 136px;
    background: #5d6873;
  }

  .splitter i {
    border: 3px solid transparent;
    border-right-color: #ccc;
    border-left: 0;
  }

  .canvas {
    flex: 1;
    min-width: 0;
    background: #000;
  }

  .canvas svg {
    display: block;
  }

  .canvas text {
    fill: #fff;
    font-size: 18px;
  }
</style>
